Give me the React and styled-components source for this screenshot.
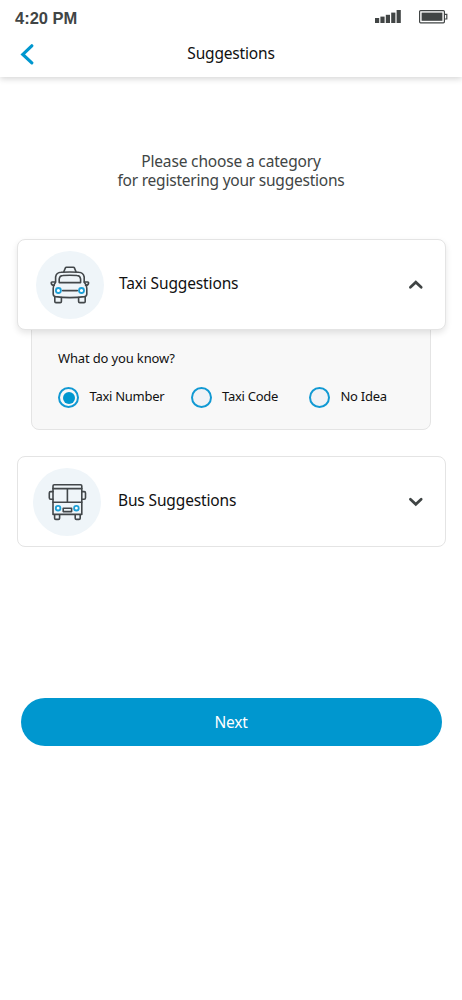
import React, { useState } from 'react';
import styled, { createGlobalStyle } from 'styled-components';

function App() {
  const [open, setOpen] = useState("taxi");
  const [known, setKnown] = useState("number");

  return (
    <Screen>
      <GlobalStyle />
      <Header>
        <StatusBar>
          <Time>4:20 PM</Time>
          <StatusIcons>
            <SignalIcon />
            <BatteryIcon />
          </StatusIcons>
        </StatusBar>
        <TitleBar>
          <BackButton aria-label="Back">
            <svg width="14" height="22" viewBox="0 0 14 22">
              <path d="M11.8 2.8 L2.8 11.4 L11.8 19.8" />
            </svg>
          </BackButton>
          <Title>Suggestions</Title>
        </TitleBar>
      </Header>

      <Intro>
        <IntroLine $spacing="-0.16px">Please choose a category</IntroLine>
        <IntroLine $spacing="-0.23px">for registering your suggestions</IntroLine>
      </Intro>

      <Categories>
        <div>
          <Card $raised={open === "taxi"} onClick={() => setOpen(open === "taxi" ? "" : "taxi")}>
            <IconCircle $left="18.5px"><TaxiIcon /></IconCircle>
            <CardLabel $gap="15px">Taxi Suggestions</CardLabel>
            <Chevron up={open === "taxi"} />
          </Card>
          {open === "taxi" && (
            <Panel>
              <Question>What do you know?</Question>
              <Options>
                <Option $width="132.5px" onClick={() => setKnown("number")}>
                  <Radio $checked={known === "number"} />
                  <OptionLabel>Taxi Number</OptionLabel>
                </Option>
                <Option $width="118.5px" onClick={() => setKnown("code")}>
                  <Radio $checked={known === "code"} />
                  <OptionLabel>Taxi Code</OptionLabel>
                </Option>
                <Option onClick={() => setKnown("none")}>
                  <Radio $checked={known === "none"} />
                  <OptionLabel>No Idea</OptionLabel>
                </Option>
              </Options>
            </Panel>
          )}
        </div>
        <Card $raised={open === "bus"} onClick={() => setOpen(open === "bus" ? "" : "bus")}>
          <IconCircle $left="15.5px"><BusIcon /></IconCircle>
          <CardLabel $gap="17px">Bus Suggestions</CardLabel>
          <Chevron up={open === "bus"} />
        </Card>
      </Categories>

      <NextButton>Next</NextButton>
    </Screen>
  )
}

function SignalIcon() {
  return (
    <svg width="26" height="14" viewBox="0 0 26 14" fill="#414545">
      <rect x="0" y="8" width="4.2" height="5" />
      <rect x="5.4" y="6.6" width="4.2" height="6.4" />
      <rect x="10.8" y="4.8" width="4.2" height="8.2" />
      <rect x="16.2" y="2.6" width="4.2" height="10.4" />
      <rect x="21.6" y="0" width="4.2" height="13" />
    </svg>
  )
}

function BatteryIcon() {
  return (
    <svg width="29" height="14" viewBox="0 0 29 14">
      <rect x="0.6" y="0.6" width="24.8" height="12.2" rx="1" fill="none" stroke="#414545" strokeWidth="1.2" />
      <rect x="2.6" y="2.6" width="20.8" height="8.2" fill="#414545" />
      <path d="M25.6 4.4 H27.8 V9 H25.6" fill="none" stroke="#414545" strokeWidth="1.2" />
    </svg>
  )
}

function Chevron({ up }) {
  return (
    <svg width="16" height="10" viewBox="0 0 16 10" fill="none" stroke="#3f4444" strokeWidth="2.7" strokeLinecap="round">
      <path d={up ? "M2.4 7.3 L7.8 2.2 L13.2 7.3" : "M2.4 2.2 L7.8 7.3 L13.2 2.2"} />
    </svg>
  )
}

function TaxiIcon() {
  return (
    <svg width="68" height="68" viewBox="0 0 68 68" fill="none" stroke="#42474a" strokeWidth="1.6" strokeLinejoin="round" strokeLinecap="round">
      <path d="M27.8 20.7 L29.4 16.9 Q29.7 16.2 30.4 16.2 H37.4 Q38.1 16.2 38.4 16.9 L40 20.7" />
      <path d="M19.6 31 V26 Q20.4 21.4 25 21.3 Q34 20.7 42.8 21.3 Q47.2 21.4 48.2 26 V31" />
      <path d="M23.2 31.6 V28 Q23.6 24.6 26.8 24.5 Q34 24 41 24.5 Q44.2 24.6 44.6 28 V31.6 Z" />
      <path d="M19.4 31 H16 Q15.2 31 15.2 31.8 Q15.3 34.4 17.8 34.4 H18.2" />
      <path d="M48.4 31 H51.8 Q52.6 31 52.6 31.8 Q52.5 34.4 50 34.4 H49.6" />
      <path d="M19.4 31.4 Q17.2 34 17.2 37.6 V43 Q17.2 45.2 19.4 45.6 Q34 47.6 48.6 45.6 Q50.8 45.2 50.8 43 V37.6 Q50.8 34 48.4 31.4" />
      <path d="M18.8 45.8 V50.4 Q18.8 51.6 20 51.6 H24.2 Q25.4 51.6 25.4 50.4 V46.6" />
      <path d="M42.6 46.6 V50.4 Q42.6 51.6 43.8 51.6 H48 Q49.2 51.6 49.2 50.4 V45.8" />
      <path d="M26.6 39.6 H41.4" />
      <circle cx="22.4" cy="39.5" r="2.5" fill="#fff" stroke="#1d9fd6" strokeWidth="1.8" />
      <circle cx="45.5" cy="39.5" r="2.5" fill="#fff" stroke="#1d9fd6" strokeWidth="1.8" />
    </svg>
  )
}

function BusIcon() {
  return (
    <svg width="68" height="68" viewBox="0 0 68 68" fill="none" stroke="#42474a" strokeWidth="1.6" strokeLinejoin="round" strokeLinecap="round">
      <path d="M20 46.4 V18 Q20 16.8 21.2 16.8 H47.6 Q48.8 16.8 48.8 18 V46.4 Z" />
      <path d="M20 20.6 H48.8 M20 34.2 H48.8 M34.4 20.6 V34.2" />
      <path d="M20 23.6 H17.6 Q16.3 23.6 16.3 25 V29.8 Q16.3 31.2 17.6 31.2 H20" />
      <path d="M48.8 23.6 H51.2 Q52.5 23.6 52.5 25 V29.8 Q52.5 31.2 51.2 31.2 H48.8" />
      <path d="M21.6 46.8 V50.2 Q21.6 51.4 22.8 51.4 H25.4 Q26.6 51.4 26.6 50.2 V46.8" />
      <path d="M42.2 46.8 V50.2 Q42.2 51.4 43.4 51.4 H46 Q47.2 51.4 47.2 50.2 V46.8" />
      <rect x="30.2" y="40.2" width="8.4" height="3.4" />
      <circle cx="25.1" cy="40.2" r="2.3" fill="#fff" stroke="#1d9fd6" strokeWidth="1.8" />
      <circle cx="43.4" cy="40.2" r="2.3" fill="#fff" stroke="#1d9fd6" strokeWidth="1.8" />
    </svg>
  )
}

const GlobalStyle = createGlobalStyle`
  * { box-sizing: border-box; }
  body {
    margin: 0;
    background-color: #fff;
    font-family: "Noto Sans", sans-serif;
  }
  button {
    font-family: inherit;
    border: 0;
    padding: 0;
    cursor: pointer;
  }
  svg { display: block; flex-shrink: 0; }
`
const Screen = styled.div`
  width: 462px;
  height: 1000px;
  display: flex;
  flex-direction: column;
  background-color: #fff;
  overflow: hidden;
`
const Header = styled.header`
  height: 77px;
  flex-shrink: 0;
  box-shadow: 0 2px 6px rgba(0, 0, 0, .16);
`
const StatusBar = styled.div`
  display: flex;
  justify-content: space-between;
  height: 36px;
  padding: 8px 14px 0 15px;
`
const Time = styled.span`
  font-family: "Liberation Sans", sans-serif;
  font-size: 16.5px;
  line-height: 20px;
  font-weight: 700;
  color: #414545;
`
const StatusIcons = styled.div`
  display: flex;
  gap: 18.5px;
  padding-top: 1.5px;
`
const TitleBar = styled.div`
  display: grid;
  grid-template-columns: 40px 1fr 40px;
  align-items: center;
  height: 36px;
`
const BackButton = styled.button`
  background: none;
  padding-left: 20px;
  path {
    fill: none;
    stroke: #0097cf;
    stroke-width: 3.2;
    stroke-linecap: round;
  }
`
const Title = styled.h1`
  margin: 0;
  padding-bottom: 2px;
  text-align: center;
  font-size: 15.5px;
  line-height: 22px;
  letter-spacing: -0.18px;
  font-weight: 400;
  color: #111;
`
const Intro = styled.div`
  display: flex;
  flex-direction: column;
  align-items: center;
  padding-top: 75px;
`
const IntroLine = styled.span`
  font-size: 15.5px;
  line-height: 19px;
  letter-spacing: ${({ $spacing }) => $spacing};
  color: #414545;
`
const Categories = styled.div`
  display: flex;
  flex-direction: column;
  gap: 26px;
  padding: 49px 16.5px 0 16.5px;
`
const Card = styled.div`
  position: relative;
  display: flex;
  align-items: center;
  height: 91px;
  padding-right: 21px;
  border: 1px solid #e4e4e4;
  border-radius: 8px;
  background-color: #fff;
  box-shadow: ${({ $raised }) => ($raised ? "0 3px 6px rgba(0, 0, 0, .1)" : "none")};
  cursor: pointer;
`
const IconCircle = styled.div`
  width: 68px;
  height: 68px;
  margin-left: ${({ $left }) => $left};
  border-radius: 50%;
  background-color: #eff5f9;
`
const CardLabel = styled.span`
  flex: 1;
  margin-left: ${({ $gap }) => $gap};
  padding-bottom: 3px;
  font-size: 15.5px;
  line-height: 22px;
  letter-spacing: -0.14px;
  color: #111;
`
const Panel = styled.div`
  height: 101px;
  margin: -1px 14.5px 0 14.5px;
  padding: 18px 0 0 26px;
  border: 1px solid #e4e4e4;
  border-radius: 0 0 8px 8px;
  background-color: #f8f8f8;
`
const Question = styled.div`
  font-size: 13px;
  line-height: 20px;
  letter-spacing: -0.15px;
  color: #111;
`
const Options = styled.div`
  display: flex;
  padding-top: 18px;
`
const Option = styled.div`
  display: flex;
  align-items: center;
  gap: 10.5px;
  width: ${({ $width }) => $width || "auto"};
  cursor: pointer;
`
const Radio = styled.span`
  width: 21px;
  height: 21px;
  padding: 2.5px;
  border: 2px solid #1199d3;
  border-radius: 50%;
  background-color: ${({ $checked }) => ($checked ? "#0097cf" : "#f0f2f6")};
  background-clip: ${({ $checked }) => ($checked ? "content-box" : "padding-box")};
`
const OptionLabel = styled.span`
  padding-bottom: 2px;
  font-size: 13px;
  line-height: 20px;
  letter-spacing: -0.28px;
  color: #111;
`
const NextButton = styled.button`
  height: 48px;
  margin: 150.5px 20.5px 0 20.5px;
  border-radius: 24px;
  background-color: #0097cf;
  color: #fff;
  font-size: 15.5px;
  letter-spacing: -0.2px;
`

export default App;
